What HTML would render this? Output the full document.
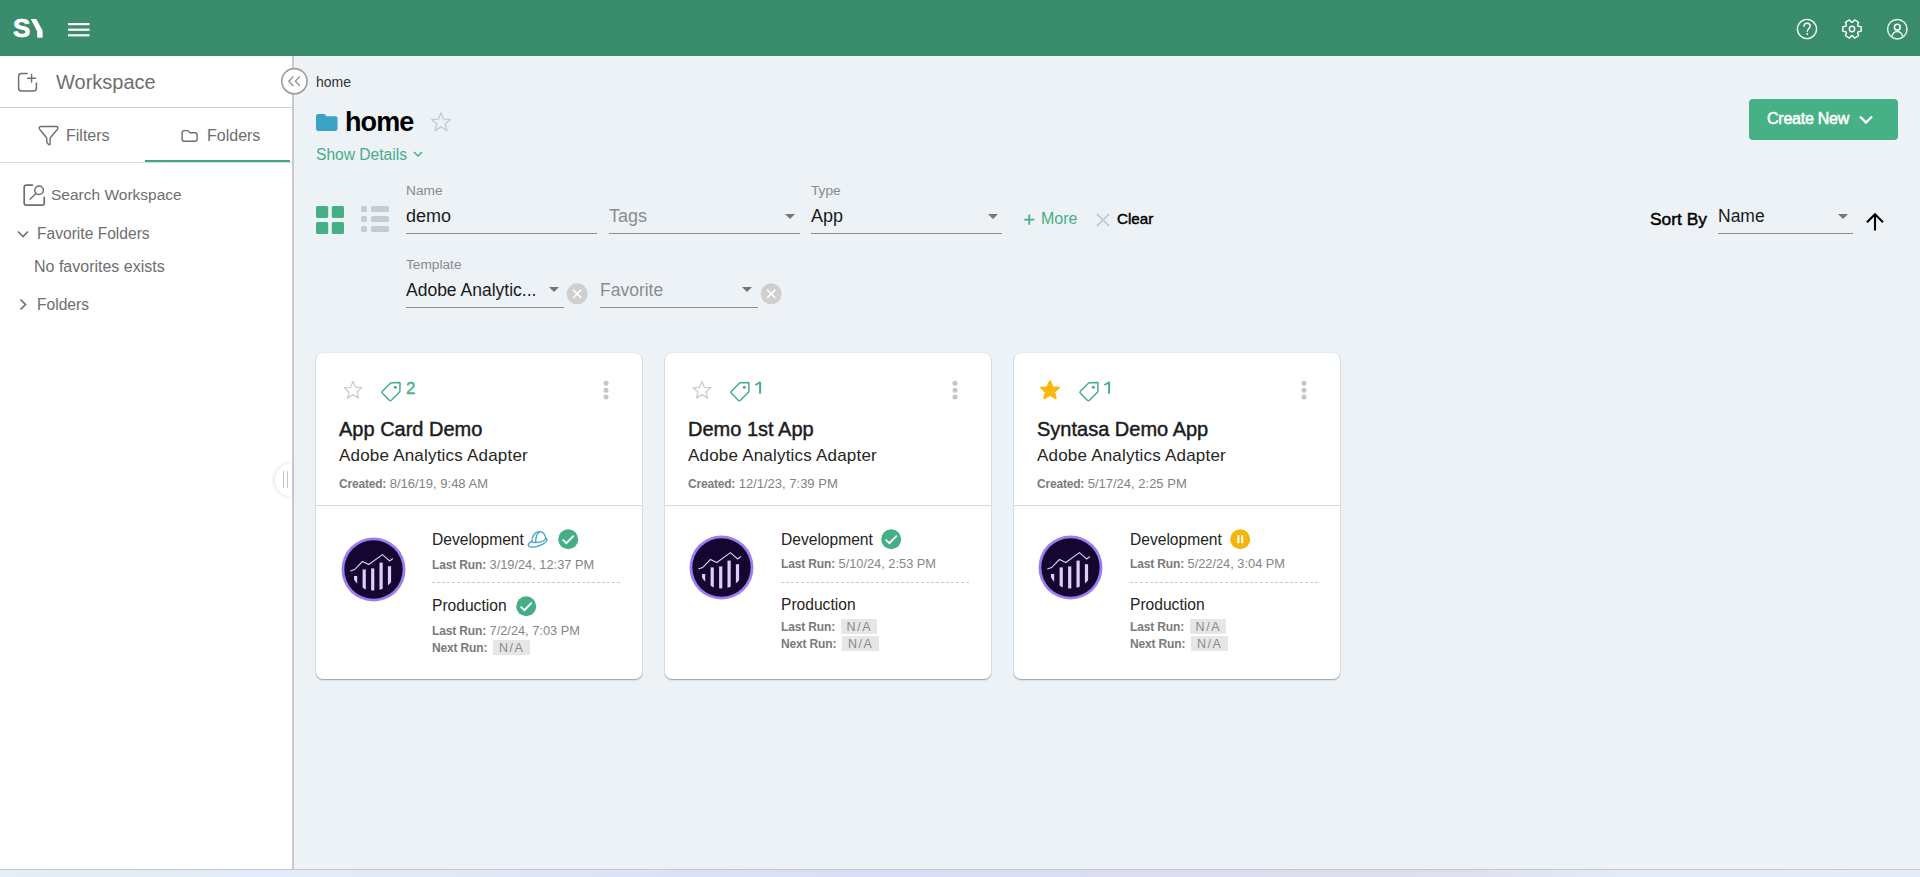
<!DOCTYPE html>
<html><head><meta charset="utf-8">
<style>
*{box-sizing:border-box;margin:0;padding:0}
html,body{width:1920px;height:877px;overflow:hidden;font-family:"Liberation Sans",sans-serif;background:#EDF2F7}
.a{position:absolute;white-space:nowrap}
#hdr{position:absolute;left:0;top:0;width:1920px;height:56px;background:#3A8D6C}
#side{position:absolute;left:0;top:56px;width:292px;height:813px;background:#fff}
#sideb{position:absolute;left:292px;top:56px;width:2px;height:813px;background:#C7CBCF}
#bot{position:absolute;left:0;top:869px;width:1920px;height:1px;background:#C4C8CC}
#bot2{position:absolute;left:0;top:870px;width:1920px;height:7px;background:linear-gradient(90deg,#E4EEF9 0%,#E2ECF8 18%,#DAE3F6 35%,#D9DFF4 48%,#DCDDF0 62%,#DEDFF0 76%,#E2EBF8 84%,#E3EDF9 100%)}
.gray{color:#6E6E6E}
.lbl{font-size:13.7px;color:#8A8A8A}
.uline{position:absolute;height:1px;background:#8E8E8E}
.tri{position:absolute;width:0;height:0;border-left:5px solid transparent;border-right:5px solid transparent;border-top:5px solid #767676}
.card{position:absolute;top:353px;width:326px;height:326px;background:#fff;border-radius:7px;box-shadow:0 1px 1.5px rgba(0,0,0,0.34),0 0 1.5px rgba(0,0,0,0.12)}
.card .div{position:absolute;left:0;top:152px;width:326px;height:1px;background:#D5D8DB}
.ttl{font-size:20px;font-weight:400;color:#1C1C1C;-webkit-text-stroke:0.45px #1C1C1C}
.sub{font-size:17px;color:#262626;letter-spacing:0.2px}
.cr{font-size:13px;color:#828282}
.cr b{color:#7C7C7C;font-size:12px;letter-spacing:-0.2px}
.env{font-size:15.6px;color:#242424}
.run{font-size:12.8px;color:#858585}
.run b{color:#7A7A7A;font-size:12px;letter-spacing:-0.15px}
.na{display:inline-block;background:#E6E6E6;color:#8A8A8A;padding:0 5px 0 6px;letter-spacing:1.6px;height:15px;line-height:17px;font-size:12.5px;margin-left:2px;vertical-align:top;overflow:hidden}
.dash{position:absolute;height:1px;background:repeating-linear-gradient(90deg,#CACACA 0 3px,transparent 3px 5px)}
</style></head><body>

<div id="hdr">
 <div class="a" style="left:13px;top:11px;font-size:26px;font-weight:700;color:#fff;line-height:34px;-webkit-text-stroke:0.7px #fff">S</div>
 <svg class="a" style="left:0;top:0" width="60" height="56"><path d="M30.8,18.9 L36.3,18.9 L42.6,30.6 L42.6,37.8 L37.2,37.8 L37.2,31.6 Z" fill="#fff"/></svg>
 <svg class="a" style="left:68px;top:22px" width="22" height="16"><rect x="0" y="1" width="21.5" height="2.2" fill="#fff"/><rect x="0" y="6.6" width="21.5" height="2.2" fill="#fff"/><rect x="0" y="12.2" width="21.5" height="2.2" fill="#fff"/></svg>
 <svg class="a" style="left:1796px;top:18px" width="22" height="22" fill="none" stroke="#fff" stroke-width="1.4"><circle cx="11" cy="11" r="9.6"/><path d="M8,8.3 C8,6.3 9.4,5.2 11.1,5.2 C12.9,5.2 14.2,6.4 14.2,8.1 C14.2,10.3 11.3,10.6 11.3,13.4" stroke-linecap="round"/><circle cx="11.3" cy="16" r="0.9" fill="#fff" stroke="none"/></svg>
 <svg class="a" style="left:1841px;top:18px" width="22" height="22" fill="none" stroke="#fff" stroke-width="1.4" stroke-linejoin="round"><path d="M17.02,8.06 L20.12,8.73 L20.12,13.27 L17.02,13.94 L16.55,14.75 L17.53,17.76 L13.59,20.04 L11.47,17.68 L10.53,17.68 L8.41,20.04 L4.47,17.76 L5.45,14.75 L4.98,13.94 L1.88,13.27 L1.88,8.73 L4.98,8.06 L5.45,7.25 L4.47,4.24 L8.41,1.96 L10.53,4.32 L11.47,4.32 L13.59,1.96 L17.53,4.24 L16.55,7.25Z"/><circle cx="11" cy="11" r="2.7"/></svg>
 <svg class="a" style="left:1886px;top:18px" width="23" height="23" fill="none" stroke="#fff" stroke-width="1.5"><circle cx="11.3" cy="11.2" r="9.7" stroke="#E6F0EA"/><circle cx="11.3" cy="9.2" r="2.9"/><path d="M6,18.4 C6.6,15.3 8.7,13.6 11.3,13.6 C13.9,13.6 16,15.3 16.6,18.4" stroke-width="1.2"/></svg>
</div>


<div id="side">
 <svg class="a" style="left:17px;top:16px" width="22" height="22" fill="none" stroke="#6E6E6E" stroke-width="1.5" stroke-linejoin="round" stroke-linecap="round"><path d="M10,1.6 H4.3 C2.8,1.6 1.6,2.8 1.6,4.3 V16.3 C1.6,17.8 2.8,19 4.3,19 H16.7 C18.2,19 19.4,17.8 19.4,16.3 V11"/><path d="M14.6,2.4 V10 M10.6,6.2 H18.6" stroke-width="1.4"/></svg>
 <div class="a gray" style="left:56px;top:14px;font-size:20px;line-height:24px">Workspace</div>
 <div class="a" style="left:0;top:51px;width:292px;height:1px;background:#C9D0D6"></div>
 <svg class="a" style="left:38px;top:69px" width="22" height="22" fill="none" stroke="#6E6E6E" stroke-width="1.4" stroke-linejoin="round"><path d="M2.9,1.5 H18.2 C19.7,1.5 20.4,3 19.5,4.2 L13.1,11.8 C12.4,12.6 12.1,13.3 12.1,14.3 V19 C12.1,19.7 11.4,20 10.9,19.6 L9.6,18.4 C9.1,18 8.8,17.5 8.8,16.8 V14.3 C8.8,13.3 8.5,12.6 7.8,11.8 L1.6,4.2 C0.7,3 1.4,1.5 2.9,1.5 Z"/></svg>
 <div class="a gray" style="left:66px;top:71px;font-size:16px;line-height:18px">Filters</div>
 <svg class="a" style="left:180px;top:72px" width="19" height="15" fill="none" stroke="#6E6E6E" stroke-width="1.4" stroke-linejoin="round"><path d="M2.1,4.6 C2.1,3.5 2.9,2.6 4,2.6 H7.4 C7.9,2.6 8.3,2.8 8.6,3.2 L9.6,4.3 C9.8,4.6 10.1,4.7 10.5,4.7 H15.1 C16.2,4.7 17.1,5.6 17.1,6.7 V11.2 C17.1,12.3 16.2,13.2 15.1,13.2 H4.1 C3,13.2 2.1,12.3 2.1,11.2 Z"/></svg>
 <div class="a gray" style="left:207px;top:71px;font-size:16px;line-height:18px">Folders</div>
 <div class="a" style="left:145px;top:104px;width:145px;height:2px;background:#3FA87C"></div>
 <div class="a" style="left:0;top:106px;width:292px;height:1px;background:#D9DCDF"></div>
 <svg class="a" style="left:22px;top:127px" width="26" height="26" fill="none" stroke="#6E6E6E" stroke-width="1.7" stroke-linejoin="round" stroke-linecap="round"><path d="M10.4,2.1 H4.3 C3.1,2.1 2.2,3 2.2,4.2 V20.1 C2.2,21.3 3.1,22.2 4.3,22.2 H20.1 C21.3,22.2 22.2,21.3 22.2,20.1 V14.3"/><circle cx="17.1" cy="7.2" r="4.3" stroke-width="1.5"/><path d="M13.9,10.5 L8,16.2" stroke-width="1.4"/></svg>
 <div class="a gray" style="left:51px;top:130px;font-size:15.5px;line-height:18px">Search Workspace</div>
 <svg class="a" style="left:16px;top:174px" width="14" height="10" fill="none" stroke="#6E6E6E" stroke-width="1.6"><path d="M2,1.5 L7,6.5 L12,1.5"/></svg>
 <div class="a gray" style="left:37px;top:169px;font-size:15.6px;line-height:18px">Favorite Folders</div>
 <div class="a gray" style="left:34px;top:202px;font-size:16px;line-height:18px">No favorites exists</div>
 <svg class="a" style="left:18px;top:242px" width="12" height="14" fill="none" stroke="#6E6E6E" stroke-width="1.6"><path d="M2.5,1.5 L7.5,6.5 L2.5,11.5"/></svg>
 <div class="a gray" style="left:37px;top:240px;font-size:15.6px;line-height:18px">Folders</div>
</div>

<div id="sideb"></div>

<!-- collapse btn -->
<svg class="a" style="left:280px;top:67px" width="29" height="29"><circle cx="14.4" cy="14.2" r="12.6" fill="#fff" stroke="#9C9C9C" stroke-width="1.6"/><path d="M13.4,9.4 L8.9,14.2 L13.4,19 M19.9,9.4 L15.3,14.2 L19.9,19" fill="none" stroke="#8E8E8E" stroke-width="1.3"/></svg>
<div class="a" style="left:316px;top:74px;font-size:14px;line-height:16px;color:#333">home</div>
<!-- title -->
<svg class="a" style="left:315px;top:113px" width="24" height="19"><path d="M1,3.2 C1,1.9 1.9,1 3.1,1 H8.6 C9.4,1 10,1.4 10.5,2 L11.4,3.3 H20.3 C21.6,3.3 22.5,4.2 22.5,5.4 V15.8 C22.5,17 21.6,17.9 20.3,17.9 H3.1 C1.9,17.9 1,17 1,15.8 Z" fill="#3AA2C3"/></svg>
<div class="a" style="left:345px;top:107px;font-size:27px;font-weight:700;line-height:31px;color:#000;letter-spacing:-0.9px">home</div>
<svg class="a" style="left:430px;top:111px" width="22" height="22" fill="none" stroke="#C5CAD0" stroke-width="1.3" stroke-linejoin="round"><path d="M11,1.8 L13.6,8.2 L20.4,8.6 L15.2,13 L16.9,19.6 L11,15.9 L5.1,19.6 L6.8,13 L1.6,8.6 L8.4,8.2 Z"/></svg>
<div class="a" style="left:316px;top:146px;font-size:15.6px;line-height:18px;color:#46AE85">Show Details</div>
<svg class="a" style="left:412px;top:150px" width="12" height="9" fill="none" stroke="#46AE85" stroke-width="1.5"><path d="M2,2 L6,6 L10,2"/></svg>
<!-- Create New -->
<div class="a" style="left:1749px;top:99px;width:149px;height:41px;background:#46B087;border-radius:4px"></div>
<div class="a" style="left:1767px;top:109px;font-size:16px;line-height:19px;color:#fff;-webkit-text-stroke:0.55px #fff;letter-spacing:-0.25px">Create New</div>
<svg class="a" style="left:1857px;top:113px" width="18" height="13" fill="none" stroke="#fff" stroke-width="2.4"><path d="M3,3.5 L9,9.5 L15,3.5"/></svg>
<!-- view icons -->
<svg class="a" style="left:316px;top:206px" width="29" height="29" fill="#45AF85"><rect x="0" y="0" width="12.2" height="12" rx="1.5"/><rect x="15.8" y="0" width="12.2" height="12" rx="1.5"/><rect x="0" y="16" width="12.2" height="12" rx="1.5"/><rect x="15.8" y="16" width="12.2" height="12" rx="1.5"/></svg>
<svg class="a" style="left:361px;top:206px" width="29" height="28" fill="#C6CCD2"><rect x="0" y="0" width="6" height="6" rx="1.5"/><rect x="10" y="0" width="18" height="6" rx="1.5"/><rect x="0" y="10" width="6" height="6" rx="1.5"/><rect x="10" y="10" width="18" height="6" rx="1.5"/><rect x="0" y="20" width="6" height="6" rx="1.5"/><rect x="10" y="20" width="18" height="6" rx="1.5"/></svg>
<!-- Name -->
<div class="a lbl" style="left:406px;top:183px;line-height:15px">Name</div>
<div class="a" style="left:406px;top:206px;font-size:18px;line-height:21px;color:#1A1A1A">demo</div>
<div class="uline" style="left:406px;top:233px;width:191px"></div>
<!-- Tags -->
<div class="a" style="left:609px;top:206px;font-size:18px;line-height:21px;color:#8C8C8C">Tags</div>
<div class="tri" style="left:785px;top:214px"></div>
<div class="uline" style="left:609px;top:233px;width:191px"></div>
<!-- Type -->
<div class="a lbl" style="left:811px;top:183px;line-height:15px">Type</div>
<div class="a" style="left:811px;top:206px;font-size:18px;line-height:21px;color:#1A1A1A">App</div>
<div class="tri" style="left:988px;top:214px"></div>
<div class="uline" style="left:811px;top:233px;width:191px"></div>
<!-- More / Clear -->
<svg class="a" style="left:1023px;top:213px" width="13" height="13" fill="none" stroke="#45AE84" stroke-width="1.8"><path d="M6.3,1.5 V11.8 M1.2,6.6 H11.4"/></svg>
<div class="a" style="left:1041px;top:210px;font-size:16px;line-height:18px;color:#45AE84">More</div>
<svg class="a" style="left:1095px;top:212px" width="16" height="16" fill="none" stroke="#C8CDD2" stroke-width="2"><path d="M2,2 L14,14 M14,2 L2,14"/></svg>
<div class="a" style="left:1117px;top:210px;font-size:15.2px;line-height:18px;color:#000;-webkit-text-stroke:0.45px #000">Clear</div>
<!-- Sort -->
<div class="a" style="left:1650px;top:209px;font-size:17.4px;line-height:20px;color:#000;-webkit-text-stroke:0.45px #000">Sort By</div>
<div class="a" style="left:1718px;top:206px;font-size:17.5px;line-height:21px;color:#1A1A1A">Name</div>
<div class="tri" style="left:1838px;top:214px"></div>
<div class="uline" style="left:1718px;top:233px;width:135px"></div>
<svg class="a" style="left:1864px;top:212px" width="22" height="21" fill="none" stroke="#000" stroke-width="2.1"><path d="M11,2.5 V18.6 M3,10.2 L11,2.2 L19,10.2"/></svg>
<!-- Template -->
<div class="a lbl" style="left:406px;top:257px;line-height:15px">Template</div>
<div class="a" style="left:406px;top:280px;font-size:17.5px;line-height:21px;color:#1A1A1A">Adobe Analytic...</div>
<div class="tri" style="left:549px;top:287px"></div>
<div class="uline" style="left:406px;top:307px;width:158px"></div>
<svg class="a" style="left:566px;top:283px" width="22" height="22"><circle cx="11.2" cy="10.8" r="10.5" fill="#CFCFCF"/><path d="M7,6.6 L15.4,15 M15.4,6.6 L7,15" stroke="#fff" stroke-width="1.5"/></svg>
<!-- Favorite -->
<div class="a" style="left:600px;top:280px;font-size:17.5px;line-height:21px;color:#8C8C8C">Favorite</div>
<div class="tri" style="left:742px;top:287px"></div>
<div class="uline" style="left:600px;top:307px;width:158px"></div>
<svg class="a" style="left:760px;top:283px" width="22" height="22"><circle cx="11.2" cy="10.8" r="10.5" fill="#CFCFCF"/><path d="M7,6.6 L15.4,15 M15.4,6.6 L7,15" stroke="#fff" stroke-width="1.5"/></svg>
<!--CARDS--><div class="card" style="left:316px"><svg class="a" style="left:26px;top:26px" width="22" height="22"><path d="M11.00,2.35 L13.44,8.37 L19.84,8.74 L14.95,12.88 L16.55,19.08 L11.00,15.61 L5.45,19.08 L7.05,12.88 L2.16,8.74 L8.56,8.37 Z" fill="none" stroke="#C9CED4" stroke-width="1.3" stroke-linejoin="round"/></svg><svg class="a" style="left:63px;top:27px" width="24" height="24" fill="none" stroke="#44AE84" stroke-width="1.5" stroke-linejoin="round"><path d="M21,3.2 L20.9,11 C20.9,11.5 20.7,11.9 20.4,12.2 L12.4,20.2 C11.8,20.8 10.9,20.8 10.3,20.2 L3.4,13.3 C2.8,12.7 2.8,11.8 3.4,11.2 L11.4,3.2 C11.7,2.9 12.1,2.7 12.6,2.7 L20.4,2.6 C20.8,2.6 21,2.8 21,3.2 Z"/><circle cx="16.3" cy="7.3" r="1.5" fill="#44AE84" stroke="none"/></svg><div class="a" style="left:90px;top:26px;font-size:17px;line-height:20px;color:#46AE85;-webkit-text-stroke:0.35px #46AE85">2</div><svg class="a" style="left:286px;top:27px" width="8" height="20" fill="#C4C4C9"><circle cx="4" cy="3.3" r="2.5"/><circle cx="4" cy="10.2" r="2.5"/><circle cx="4" cy="17.1" r="2.5"/></svg><div class="a ttl" style="left:23px;top:64px;line-height:24px">App Card Demo</div><div class="a sub" style="left:23px;top:93px;line-height:20px">Adobe Analytics Adapter</div><div class="a cr" style="left:23px;top:123px;line-height:15px"><b>Created:</b> 8/16/19, 9:48 AM</div><div class="div"></div><svg class="a" style="left:25px;top:184px" width="66" height="66" viewBox="0 0 66 66"><defs><clipPath id="LC"><circle cx="32.5" cy="31" r="22.6"/></clipPath></defs><circle cx="32.5" cy="32.5" r="32" fill="#9C7EF2"/><circle cx="32.5" cy="32.5" r="29.2" fill="#140631"/><g clip-path="url(#LC)" fill="#DCCFF8"><rect x="13" y="39" width="3.2" height="20"/><rect x="21.6" y="32.4" width="3.2" height="30"/><rect x="30.1" y="31.4" width="3.2" height="30"/><rect x="38.5" y="25.6" width="3.2" height="30"/><rect x="46.9" y="29.2" width="3.2" height="30"/></g><path d="M9.3,34 L13.6,32.6 L21.4,24.5 L27.8,27.5 L41.4,17.6 L48.7,24 L51.9,21.5" fill="none" stroke="#DCCFF8" stroke-width="1.1"/></svg><div class="a env" style="left:116px;top:178px;line-height:18px">Development</div><svg class="a" style="left:210px;top:178px" width="24" height="18" fill="none" stroke="#3AA3C2" stroke-width="1.25" stroke-linejoin="round"><ellipse cx="11.6" cy="11.4" rx="9.9" ry="3.7" transform="rotate(-19 11.6 11.4)"/><path d="M6.2,11.2 C5.2,6.5 8.4,0.7 13.6,0.7 C17.4,0.7 19.9,3.6 19.3,8.6 C16.5,11 10.5,12.2 6.2,11.2 Z" fill="#fff"/><path d="M13.4,0.9 C10.8,2.6 9.4,6.4 9.8,11.9"/></svg><svg class="a" style="left:242px;top:176px" width="21" height="21"><circle cx="10.2" cy="10.2" r="10" fill="#45AE83"/><path d="M4.6,10.6 L8.4,14.2 L15.8,6.6" fill="none" stroke="#fff" stroke-width="1.9"/></svg><div class="a run" style="left:116px;top:204px;line-height:15px"><b>Last Run:</b> 3/19/24, 12:37 PM</div><div class="dash" style="left:116px;top:229px;width:188px"></div><div class="a env" style="left:116px;top:244px;line-height:18px">Production</div><svg class="a" style="left:200px;top:243px" width="21" height="21"><circle cx="10.2" cy="10.2" r="10" fill="#45AE83"/><path d="M4.6,10.6 L8.4,14.2 L15.8,6.6" fill="none" stroke="#fff" stroke-width="1.9"/></svg><div class="a run" style="left:116px;top:270px;line-height:15px"><b>Last Run:</b> 7/2/24, 7:03 PM</div><div class="a run" style="left:116px;top:287px;line-height:15px"><b>Next Run:</b> <span class="na">N/A</span></div></div><div class="card" style="left:665px"><svg class="a" style="left:26px;top:26px" width="22" height="22"><path d="M11.00,2.35 L13.44,8.37 L19.84,8.74 L14.95,12.88 L16.55,19.08 L11.00,15.61 L5.45,19.08 L7.05,12.88 L2.16,8.74 L8.56,8.37 Z" fill="none" stroke="#C9CED4" stroke-width="1.3" stroke-linejoin="round"/></svg><svg class="a" style="left:63px;top:27px" width="24" height="24" fill="none" stroke="#44AE84" stroke-width="1.5" stroke-linejoin="round"><path d="M21,3.2 L20.9,11 C20.9,11.5 20.7,11.9 20.4,12.2 L12.4,20.2 C11.8,20.8 10.9,20.8 10.3,20.2 L3.4,13.3 C2.8,12.7 2.8,11.8 3.4,11.2 L11.4,3.2 C11.7,2.9 12.1,2.7 12.6,2.7 L20.4,2.6 C20.8,2.6 21,2.8 21,3.2 Z"/><circle cx="16.3" cy="7.3" r="1.5" fill="#44AE84" stroke="none"/></svg><svg class="a" style="left:88px;top:27px" width="10" height="16"><rect x="6.1" y="1.8" width="2" height="11.9" fill="#46AE85"/><path d="M7.2,2.3 L2.4,5.1" stroke="#46AE85" stroke-width="1.7"/></svg><svg class="a" style="left:286px;top:27px" width="8" height="20" fill="#C4C4C9"><circle cx="4" cy="3.3" r="2.5"/><circle cx="4" cy="10.2" r="2.5"/><circle cx="4" cy="17.1" r="2.5"/></svg><div class="a ttl" style="left:23px;top:64px;line-height:24px">Demo 1st App</div><div class="a sub" style="left:23px;top:93px;line-height:20px">Adobe Analytics Adapter</div><div class="a cr" style="left:23px;top:123px;line-height:15px"><b>Created:</b> 12/1/23, 7:39 PM</div><div class="div"></div><svg class="a" style="left:24px;top:182px" width="66" height="66" viewBox="0 0 66 66"><defs><clipPath id="LC"><circle cx="32.5" cy="31" r="22.6"/></clipPath></defs><circle cx="32.5" cy="32.5" r="32" fill="#9C7EF2"/><circle cx="32.5" cy="32.5" r="29.2" fill="#140631"/><g clip-path="url(#LC)" fill="#DCCFF8"><rect x="13" y="39" width="3.2" height="20"/><rect x="21.6" y="32.4" width="3.2" height="30"/><rect x="30.1" y="31.4" width="3.2" height="30"/><rect x="38.5" y="25.6" width="3.2" height="30"/><rect x="46.9" y="29.2" width="3.2" height="30"/></g><path d="M9.3,34 L13.6,32.6 L21.4,24.5 L27.8,27.5 L41.4,17.6 L48.7,24 L51.9,21.5" fill="none" stroke="#DCCFF8" stroke-width="1.1"/></svg><div class="a env" style="left:116px;top:178px;line-height:18px">Development</div><svg class="a" style="left:216px;top:176px" width="21" height="21"><circle cx="10.2" cy="10.2" r="10" fill="#45AE83"/><path d="M4.6,10.6 L8.4,14.2 L15.8,6.6" fill="none" stroke="#fff" stroke-width="1.9"/></svg><div class="a run" style="left:116px;top:203px;line-height:15px"><b>Last Run:</b> 5/10/24, 2:53 PM</div><div class="dash" style="left:116px;top:229px;width:188px"></div><div class="a env" style="left:116px;top:243px;line-height:18px">Production</div><div class="a run" style="left:116px;top:266px;line-height:15px"><b>Last Run:</b> <span class="na">N/A</span></div><div class="a run" style="left:116px;top:283px;line-height:15px"><b>Next Run:</b> <span class="na">N/A</span></div></div><div class="card" style="left:1014px"><svg class="a" style="left:25px;top:26px" width="22" height="22"><path d="M11.00,2.35 L13.44,8.37 L19.84,8.74 L14.95,12.88 L16.55,19.08 L11.00,15.61 L5.45,19.08 L7.05,12.88 L2.16,8.74 L8.56,8.37 Z" fill="#FDB60C" stroke="#FDB60C" stroke-width="2.2" stroke-linejoin="round"/></svg><svg class="a" style="left:63px;top:27px" width="24" height="24" fill="none" stroke="#44AE84" stroke-width="1.5" stroke-linejoin="round"><path d="M21,3.2 L20.9,11 C20.9,11.5 20.7,11.9 20.4,12.2 L12.4,20.2 C11.8,20.8 10.9,20.8 10.3,20.2 L3.4,13.3 C2.8,12.7 2.8,11.8 3.4,11.2 L11.4,3.2 C11.7,2.9 12.1,2.7 12.6,2.7 L20.4,2.6 C20.8,2.6 21,2.8 21,3.2 Z"/><circle cx="16.3" cy="7.3" r="1.5" fill="#44AE84" stroke="none"/></svg><svg class="a" style="left:88px;top:27px" width="10" height="16"><rect x="6.1" y="1.8" width="2" height="11.9" fill="#46AE85"/><path d="M7.2,2.3 L2.4,5.1" stroke="#46AE85" stroke-width="1.7"/></svg><svg class="a" style="left:286px;top:27px" width="8" height="20" fill="#C4C4C9"><circle cx="4" cy="3.3" r="2.5"/><circle cx="4" cy="10.2" r="2.5"/><circle cx="4" cy="17.1" r="2.5"/></svg><div class="a ttl" style="left:23px;top:64px;line-height:24px">Syntasa Demo App</div><div class="a sub" style="left:23px;top:93px;line-height:20px">Adobe Analytics Adapter</div><div class="a cr" style="left:23px;top:123px;line-height:15px"><b>Created:</b> 5/17/24, 2:25 PM</div><div class="div"></div><svg class="a" style="left:24px;top:182px" width="66" height="66" viewBox="0 0 66 66"><defs><clipPath id="LC"><circle cx="32.5" cy="31" r="22.6"/></clipPath></defs><circle cx="32.5" cy="32.5" r="32" fill="#9C7EF2"/><circle cx="32.5" cy="32.5" r="29.2" fill="#140631"/><g clip-path="url(#LC)" fill="#DCCFF8"><rect x="13" y="39" width="3.2" height="20"/><rect x="21.6" y="32.4" width="3.2" height="30"/><rect x="30.1" y="31.4" width="3.2" height="30"/><rect x="38.5" y="25.6" width="3.2" height="30"/><rect x="46.9" y="29.2" width="3.2" height="30"/></g><path d="M9.3,34 L13.6,32.6 L21.4,24.5 L27.8,27.5 L41.4,17.6 L48.7,24 L51.9,21.5" fill="none" stroke="#DCCFF8" stroke-width="1.1"/></svg><div class="a env" style="left:116px;top:178px;line-height:18px">Development</div><svg class="a" style="left:216px;top:176px" width="21" height="21"><circle cx="10.2" cy="10.2" r="10" fill="#F5B50E"/><rect x="7.4" y="6.2" width="2" height="8" fill="#fff"/><rect x="11.2" y="6.2" width="2" height="8" fill="#fff"/></svg><div class="a run" style="left:116px;top:203px;line-height:15px"><b>Last Run:</b> 5/22/24, 3:04 PM</div><div class="dash" style="left:116px;top:229px;width:188px"></div><div class="a env" style="left:116px;top:243px;line-height:18px">Production</div><div class="a run" style="left:116px;top:266px;line-height:15px"><b>Last Run:</b> <span class="na">N/A</span></div><div class="a run" style="left:116px;top:283px;line-height:15px"><b>Next Run:</b> <span class="na">N/A</span></div></div><!--/CARDS-->
<!-- sidebar handle -->
<div class="a" style="left:275px;top:463px;width:17px;height:34px;border-radius:17px 0 0 17px;background:#fff;box-shadow:-1px 0 4px rgba(0,0,0,0.12)"></div>
<div class="a" style="left:283px;top:471px;width:1px;height:17px;background:#C4C4C4"></div>
<div class="a" style="left:287px;top:471px;width:1px;height:17px;background:#C4C4C4"></div>
<div id="bot"></div>
<div id="bot2"></div>
</body></html>
